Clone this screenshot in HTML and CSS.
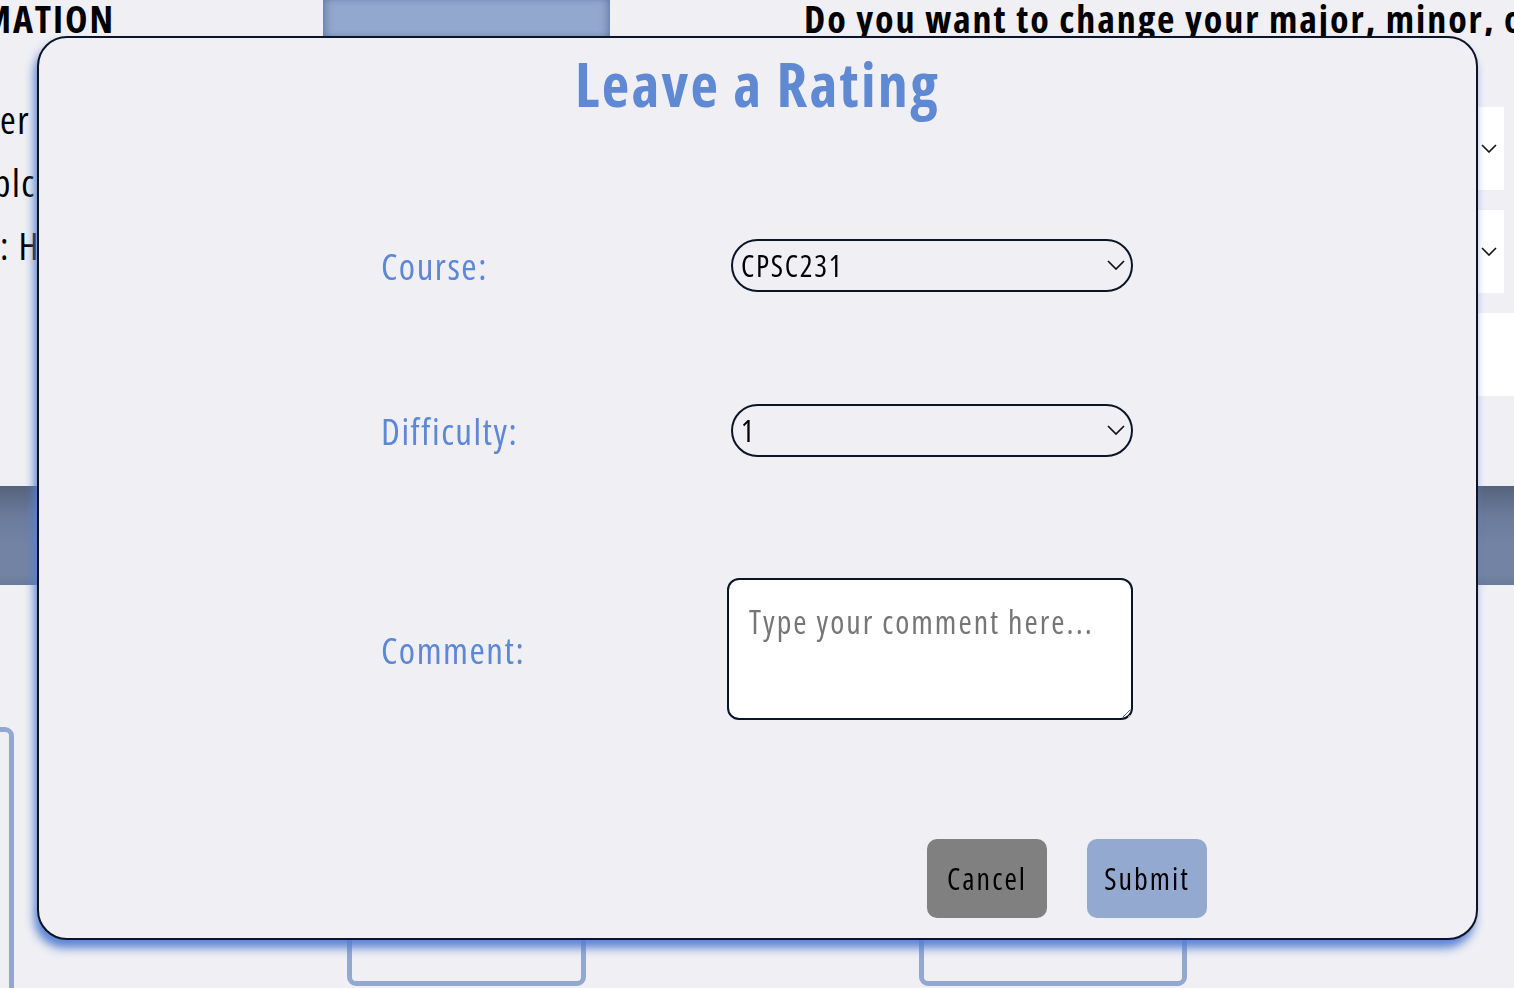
FILE: index.html
```html
<!DOCTYPE html>
<html lang="en">
<head>
<meta charset="utf-8">
<title>Leave a Rating</title>
<link rel="stylesheet" href="styles.css">
</head>
<body>
<div class="page">
  <header class="topbar">
    <div class="clip-left"><h2 class="heading">INFORMATION</h2></div>
    <div class="tab"></div>
    <h2 class="heading question">Do you want to change your major, minor, or concentration?</h2>
  </header>
  <section class="middle">
    <div class="info">
      <p class="line">er</p>
      <p class="line shift">plc</p>
      <p class="line">: H</p>
    </div>
    <div class="controls">
      <div class="field"><svg class="chev" width="16" height="9" viewBox="0 0 16 9"><polyline points="1,1 8,8 15,1" fill="none" stroke="#111" stroke-width="1.6"/></svg></div>
      <div class="field"><svg class="chev" width="16" height="9" viewBox="0 0 16 9"><polyline points="1,1 8,8 15,1" fill="none" stroke="#111" stroke-width="1.6"/></svg></div>
      <div class="field wide"></div>
    </div>
  </section>
  <div class="band"></div>
  <section class="cards">
    <div class="card card-left"></div>
    <div class="card card-mid"></div>
    <div class="card card-right"></div>
  </section>
</div>

<div class="modal">
  <h1 class="title">Leave a Rating</h1>
  <form class="form">
    <div class="row">
      <label class="label" for="course">Course:</label>
      <div class="select-wrap">
        <select id="course" class="select"><option>CPSC231</option></select>
        <svg class="sel-chev" width="18" height="10" viewBox="0 0 18 10"><polyline points="1,1 9,9 17,1" fill="none" stroke="#111" stroke-width="1.7"/></svg>
      </div>
    </div>
    <div class="row row-2">
      <label class="label" for="difficulty">Difficulty:</label>
      <div class="select-wrap">
        <select id="difficulty" class="select"><option>1</option></select>
        <svg class="sel-chev" width="18" height="10" viewBox="0 0 18 10"><polyline points="1,1 9,9 17,1" fill="none" stroke="#111" stroke-width="1.7"/></svg>
      </div>
    </div>
    <div class="row row-3">
      <label class="label" for="comment">Comment:</label>
      <textarea id="comment" class="comment" placeholder="Type your comment here..."></textarea>
    </div>
  </form>
  <div class="actions">
    <button class="btn btn-cancel" type="button">Cancel</button>
    <button class="btn btn-submit" type="button">Submit</button>
  </div>
</div>
</body>
</html>
```

FILE: styles.css
```css
* { box-sizing: border-box; }

html, body {
  margin: 0;
  padding: 0;
  width: 1514px;
  height: 988px;
  overflow: hidden;
  background: #efeff4;
  font-family: "Open Sans", "DejaVu Sans Condensed", sans-serif;
  font-stretch: 75%;
  color: #000;
}

.page {
  width: 1514px;
  height: 988px;
  overflow: hidden;
}

/* ---------- background page ---------- */
.topbar {
  display: flex;
  align-items: flex-start;
  height: 36px;
  overflow: hidden;
}

.topbar > * { flex: none; }

.heading {
  margin: 0;
  font-size: 38px;
  font-weight: 700;
  letter-spacing: 1.9px;
  line-height: 36px;
  white-space: nowrap;
}

.clip-left {
  width: 115px;
  display: flex;
  justify-content: flex-end;
  overflow: hidden;
}

.clip-left .heading { flex: none; }

.tab {
  width: 287px;
  height: 36px;
  margin-left: 208px;
  background: #93a8cf;
  box-shadow: inset 6px 0 8px -4px rgba(60, 78, 120, 0.55), inset -6px 0 8px -4px rgba(60, 78, 120, 0.55);
}

.question {
  margin-left: 194px;
}

.middle {
  display: flex;
  justify-content: space-between;
  height: 450px;
}

.info {
  padding-top: 52px;
}

.line {
  margin: 0;
  font-size: 38px;
  letter-spacing: 1.5px;
  line-height: 63px;
  white-space: nowrap;
}

.line.shift { margin-left: -7px; }

.controls {
  margin-top: 71px;
  margin-right: 10px;
  width: 300px;
  display: flex;
  flex-direction: column;
  gap: 20px;
}

.field {
  height: 83px;
  background: #ffffff;
  display: flex;
  align-items: center;
  justify-content: flex-end;
  padding-right: 7px;
}

.field.wide {
  width: 320px;
}

.band {
  height: 99px;
  background: linear-gradient(to bottom, #56637c 0%, #6b7b9b 30%, #7383a3 60%, #7383a3 90%, #6a7a99 100%);
}

.cards {
  margin-top: 142px;
  display: flex;
  align-items: flex-start;
  gap: 333px;
}

.card {
  border: 5px solid #93a8cf;
  border-radius: 9px;
  flex: none;
}

.card-left {
  width: 200px;
  height: 320px;
  margin-left: -186px;
}

.card-mid {
  width: 239px;
  height: 259px;
}

.card-right {
  width: 268px;
  height: 259px;
}

/* ---------- modal ---------- */
.modal {
  position: fixed;
  left: 37px;
  top: 36px;
  width: 1441px;
  height: 904px;
  background: #efeff4;
  border: 2px solid #0b1526;
  border-radius: 30px;
  box-shadow: -3px 8px 10px rgba(84, 126, 208, 0.95);
}

.title {
  margin: 10px 0 0;
  text-align: center;
  font-size: 60px;
  line-height: 72px;
  font-weight: 700;
  letter-spacing: 2.3px;
  color: #6089d4;
}

.form {
  margin: 119px 0 0 342px;
  display: flex;
  flex-direction: column;
}

.row {
  display: flex;
  align-items: center;
}

.row-2 { margin-top: 112px; }
.row-3 { margin-top: 121px; }

.label {
  width: 346px;
  flex: none;
  font-size: 37px;
  letter-spacing: 1.5px;
  color: #5d88d5;
}

.select-wrap {
  position: relative;
  margin-left: 4px;
  width: 402px;
  height: 53px;
}

.select {
  appearance: none;
  -webkit-appearance: none;
  width: 100%;
  height: 100%;
  border: 2px solid #0b1526;
  border-radius: 27px;
  background: transparent;
  padding: 0 40px 0 8px;
  font-family: inherit;
  font-stretch: inherit;
  font-size: 30px;
  letter-spacing: 1.7px;
  color: #000;
  outline: none;
}

.sel-chev {
  position: absolute;
  right: 8px;
  top: 21px;
  pointer-events: none;
}

.comment {
  width: 406px;
  height: 142px;
  border: 2px solid #0b1526;
  border-radius: 12px;
  background: #ffffff;
  padding: 24px 20px 14px;
  font-family: inherit;
  font-stretch: inherit;
  font-size: 32px;
  letter-spacing: 2px;
  line-height: 36px;
  color: #000;
  outline: none;
}

.comment::placeholder {
  color: #767676;
}

.actions {
  margin: 119px 0 0 888px;
  display: flex;
  gap: 40px;
}

.btn {
  width: 120px;
  height: 79px;
  border: none;
  border-radius: 10px;
  font-family: inherit;
  font-stretch: inherit;
  font-size: 30px;
  letter-spacing: 2px;
  color: #000;
  padding: 0;
}

.btn-cancel { background: #808080; }
.btn-submit { background: #94a9d0; }
```
